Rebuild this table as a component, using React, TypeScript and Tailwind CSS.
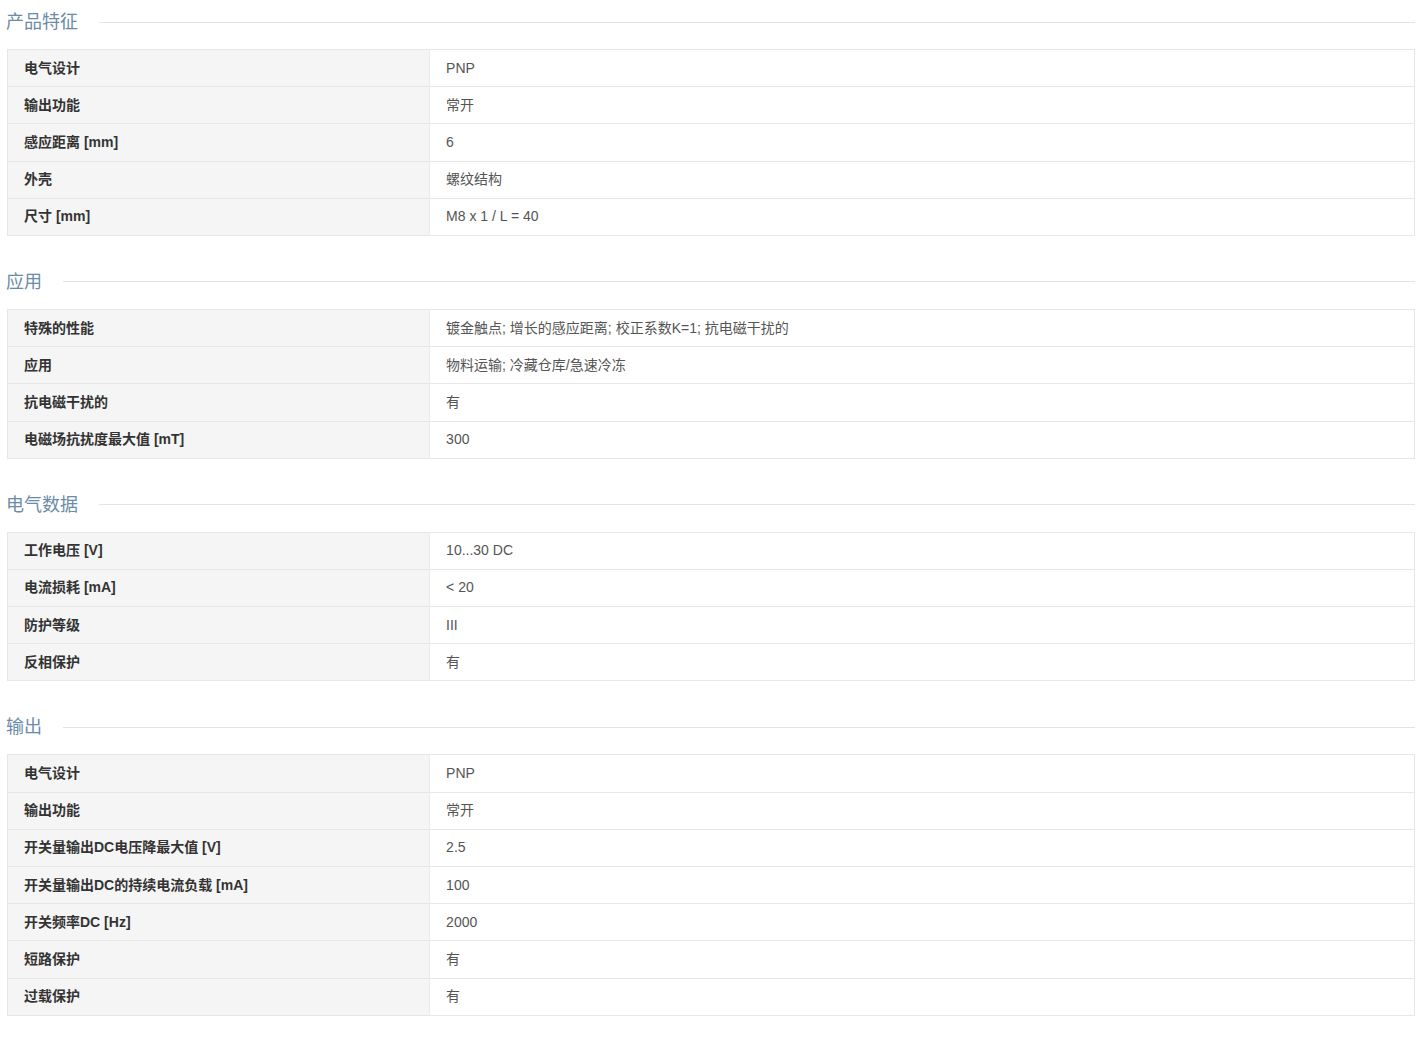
import React from 'react';

type Row = [string, string];

interface Section {
  title: string;
  rows: Row[];
}

const sections: Section[] = [
  {
    title: '产品特征',
    rows: [
      ['电气设计', 'PNP'],
      ['输出功能', '常开'],
      ['感应距离 [mm]', '6'],
      ['外壳', '螺纹结构'],
      ['尺寸 [mm]', 'M8 x 1 / L = 40'],
    ],
  },
  {
    title: '应用',
    rows: [
      ['特殊的性能', '镀金触点; 增长的感应距离; 校正系数K=1; 抗电磁干扰的'],
      ['应用', '物料运输; 冷藏仓库/急速冷冻'],
      ['抗电磁干扰的', '有'],
      ['电磁场抗扰度最大值 [mT]', '300'],
    ],
  },
  {
    title: '电气数据',
    rows: [
      ['工作电压 [V]', '10...30 DC'],
      ['电流损耗 [mA]', '< 20'],
      ['防护等级', 'III'],
      ['反相保护', '有'],
    ],
  },
  {
    title: '输出',
    rows: [
      ['电气设计', 'PNP'],
      ['输出功能', '常开'],
      ['开关量输出DC电压降最大值 [V]', '2.5'],
      ['开关量输出DC的持续电流负载 [mA]', '100'],
      ['开关频率DC [Hz]', '2000'],
      ['短路保护', '有'],
      ['过载保护', '有'],
    ],
  },
];

const SpecTable: React.FC<{ section: Section; first: boolean }> = ({ section, first }) => (
  <div className={first ? '' : 'mt-[24px]'}>
    <div className="flex items-center h-[42px] pt-[2px]">
      <h3 className="text-[18px] leading-[26px] text-[#6b8ba6] -ml-px whitespace-nowrap">{section.title}</h3>
      <div className="flex-1 ml-[21px] border-t border-[#e3e3e3]" />
    </div>
    <table className="mt-[7px] w-full border-collapse border border-[#e6e6e6] text-[14px]">
      <tbody>
        {section.rows.map(([label, value], i) => (
          <tr key={i} className="border-t border-[#e6e6e6] h-[37.2px]">
            <td className="w-[30%] bg-[#f5f5f5] pl-[16px] font-bold text-[#333]">{label}</td>
            <td className="bg-white pl-[16px] text-[#555] border-l border-[#ececec]">{value}</td>
          </tr>
        ))}
      </tbody>
    </table>
  </div>
);

export default function App() {
  return (
    <div
      className="bg-white pl-[7px] pr-[8px] min-h-[1041px]"
      style={{ fontFamily: '"Liberation Sans", "Noto Sans CJK SC", sans-serif' }}
    >
      {sections.map((s, i) => (
        <SpecTable key={s.title} section={s} first={i === 0} />
      ))}
    </div>
  );
}
